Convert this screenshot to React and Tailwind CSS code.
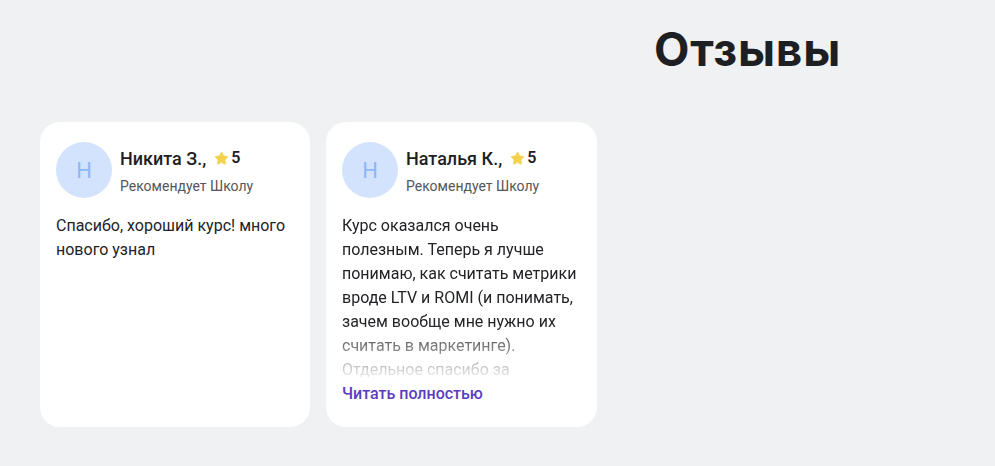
import { Star } from "lucide-react";

const reviews = [
  {
    name: "Никита З.,",
    rating: 5,
    text: "Спасибо, хороший курс! много нового узнал",
    long: false,
  },
  {
    name: "Наталья К.,",
    rating: 5,
    text: "Курс оказался очень полезным. Теперь я лучше понимаю, как считать метрики вроде LTV и ROMI (и понимать, зачем вообще мне нужно их считать в маркетинге). Отдельное спасибо за обратную связь по домашним заданиям.",
    long: true,
  },
];

function ReviewCard({ review }) {
  return (
    <div className="bg-white rounded-[20px] px-4 pt-5 pb-[21px] flex flex-col">
      {/* Header */}
      <div className="flex items-center gap-2">
        <div className="w-14 h-14 rounded-full bg-[#d3e3fd] flex items-center justify-center text-[22px] text-[#8fb7f7] shrink-0">
          Н
        </div>
        <div className="flex flex-col">
          <div className="flex items-center h-6 mt-[2px]">
            <span className="text-[18px] font-medium text-[#1e1f23]">{review.name}</span>
            <Star size={15} className="ml-2 text-[#f3d24f]" fill="#f3d24f" strokeWidth={1.5} />
            <span className="ml-[2px] text-[16px] font-semibold text-[#1e1f23]">{review.rating}</span>
          </div>
          <span className="mt-[6px] text-[14px] leading-5 text-[#555658]">Рекомендует Школу</span>
        </div>
      </div>

      {/* Body */}
      {review.long ? (
        <>
          <p className="mt-4 text-[16px] leading-6 text-[#222326] h-[168px] overflow-hidden [mask-image:linear-gradient(to_bottom,black_65%,transparent_100%)]">
            {review.text}
          </p>
          <a className="text-[16px] leading-6 font-medium text-[#5a3dbf] cursor-pointer">Читать полностью</a>
        </>
      ) : (
        <p className="mt-4 text-[16px] leading-6 text-[#222326]">{review.text}</p>
      )}
    </div>
  );
}

export default function App() {
  return (
    <div className="w-[995px] h-[466px] bg-[#f0f1f3] font-['Roboto',sans-serif] overflow-hidden">
      <h2 className="ml-[500px] pt-[26px] text-center text-[46px] leading-[46px] tracking-[0.8px] font-bold text-[#1e1f23] font-['Inter',sans-serif]">
        Отзывы
      </h2>

      <div className="mt-[50px] ml-10 grid grid-cols-[270px_271px] gap-4">
        {reviews.map((r, i) => (
          <ReviewCard key={i} review={r} />
        ))}
      </div>
    </div>
  );
}
